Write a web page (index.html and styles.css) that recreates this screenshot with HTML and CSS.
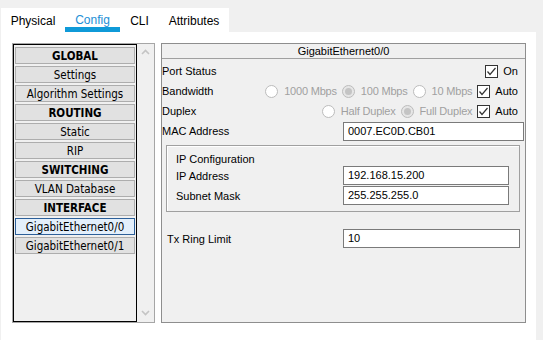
FILE: index.html
```html
<!DOCTYPE html>
<html lang="en">
<head>
  <meta charset="UTF-8" />
  <title>Router Config</title>
  <link rel="stylesheet" href="styles.css">
</head>
<body>
  <div class="window">
    <div class="tabs">
      <div class="tab tab-physical">Physical</div>
      <div class="tab tab-config active">Config</div>
      <div class="tab tab-cli">CLI</div>
      <div class="tab tab-attr">Attributes</div>
    </div>

    <div class="page">
      <div class="nav">
        <div class="nav-list">
          <div class="nav-item head">GLOBAL</div>
          <div class="nav-item">Settings</div>
          <div class="nav-item">Algorithm Settings</div>
          <div class="nav-item head">ROUTING</div>
          <div class="nav-item">Static</div>
          <div class="nav-item">RIP</div>
          <div class="nav-item head">SWITCHING</div>
          <div class="nav-item">VLAN Database</div>
          <div class="nav-item head">INTERFACE</div>
          <div class="nav-item selected">GigabitEthernet0/0</div>
          <div class="nav-item">GigabitEthernet0/1</div>
        </div>
        <div class="scrollbar">
          <svg width="9" height="6" viewBox="0 0 9 6"><polyline points="1,5 4.5,1.5 8,5" /></svg>
          <svg width="9" height="6" viewBox="0 0 9 6"><polyline points="1,1 4.5,4.5 8,1" /></svg>
        </div>
      </div>

      <div class="panel">
        <div class="panel-title">GigabitEthernet0/0</div>
        <div class="rows">
          <div class="row">
            <span class="label">Port Status</span>
            <div class="opts">
              <span class="check"><svg width="11" height="11" viewBox="0 0 11 11"><polyline points="1.5,5.5 4,8.5 9.5,2" /></svg></span>
              <span class="opt-text">On</span>
            </div>
          </div>
          <div class="row">
            <span class="label">Bandwidth</span>
            <div class="opts">
              <span class="radio"></span><span class="opt-text muted">1000 Mbps</span>
              <span class="radio on"></span><span class="opt-text muted">100 Mbps</span>
              <span class="radio"></span><span class="opt-text muted">10 Mbps</span>
              <span class="check"><svg width="11" height="11" viewBox="0 0 11 11"><polyline points="1.5,5.5 4,8.5 9.5,2" /></svg></span>
              <span class="opt-text">Auto</span>
            </div>
          </div>
          <div class="row">
            <span class="label">Duplex</span>
            <div class="opts">
              <span class="radio"></span><span class="opt-text muted">Half Duplex</span>
              <span class="radio on"></span><span class="opt-text muted">Full Duplex</span>
              <span class="check"><svg width="11" height="11" viewBox="0 0 11 11"><polyline points="1.5,5.5 4,8.5 9.5,2" /></svg></span>
              <span class="opt-text">Auto</span>
            </div>
          </div>
          <div class="row">
            <span class="label">MAC Address</span>
            <div class="field mac">0007.EC0D.CB01</div>
          </div>
        </div>

        <div class="ip-box">
          <div class="ip-title">IP Configuration</div>
          <div class="ip-row">
            <span class="label">IP Address</span>
            <div class="field ip">192.168.15.200</div>
          </div>
          <div class="ip-row">
            <span class="label">Subnet Mask</span>
            <div class="field ip">255.255.255.0</div>
          </div>
        </div>

        <div class="tx-row">
          <span class="label">Tx Ring Limit</span>
          <div class="field tx">10</div>
        </div>
      </div>
    </div>
  </div>
</body>
</html>
```

FILE: styles.css
```css
* {
  box-sizing: border-box;
}

body {
  margin: 0;
  background: #f0f0f0;
  font-family: "Liberation Sans", Arial, sans-serif;
  font-size: 11px;
  color: #000;
}

.window {
  margin: 8px 0 0 1px;
  width: 535px;
  height: 332px;
  display: flex;
  flex-direction: column;
}

/* TABS */
.tabs {
  display: flex;
  width: 228px;
  height: 24px;
  background: #fff;
}

.tab {
  display: flex;
  align-items: center;
  justify-content: center;
  font-size: 12px;
  padding-top: 1px;
}

.tab-physical { width: 64px; }
.tab-config { width: 55px; }
.tab-cli { width: 39px; }
.tab-attr { width: 70px; }

.tab.active {
  color: #1c8fd6;
  box-shadow: inset 0 -5px 0 #0f9ad8;
  padding-bottom: 1px;
}

/* PAGE */
.page {
  flex: 1;
  background: #fff;
  display: flex;
  gap: 6px;
  padding: 11px 0 0 11px;
}

.nav {
  width: 143px;
  height: 280px;
  border: 1px solid #a6a6a6;
  display: flex;
  background: #f0f0f0;
}

.nav-list {
  width: 124px;
  border: 1px solid #000;
  padding: 2px 1px 1px;
}

.nav-item {
  height: 17px;
  margin-bottom: 2px;
  border: 1px solid #adadad;
  background: #e1e1e1;
  text-align: center;
  line-height: 16px;
  font-family: "DejaVu Sans Condensed", "DejaVu Sans", sans-serif;
  font-size: 11.5px;
  white-space: nowrap;
}

.nav-item.head {
  font-weight: bold;
}

.nav-item.selected {
  background: #e3effb;
  border-color: #2c5f99;
}

.scrollbar {
  flex: 1;
  display: flex;
  flex-direction: column;
  justify-content: space-between;
  align-items: center;
  padding: 5px 0 6px;
}

.scrollbar polyline {
  fill: none;
  stroke: #c4c4c4;
  stroke-width: 1.6;
}

/* PANEL */
.panel {
  width: 365px;
  height: 280px;
  border: 1px solid #8e8e8e;
  background: #f0f0f0;
}

.panel-title {
  height: 15px;
  border-bottom: 1px solid #a0a0a0;
  text-align: center;
  line-height: 14px;
}

.rows {
  padding-top: 2px;
}

.row {
  display: flex;
  align-items: center;
  height: 20px;
}

.opts {
  margin-left: auto;
  padding-right: 7px;
  display: flex;
  align-items: center;
}

.opt-text {
  margin: 0 5px 0 6px;
  letter-spacing: -0.2px;
}

.opt-text:last-child {
  margin-right: 0;
  margin-left: 5px;
  letter-spacing: 0;
}

.muted {
  color: #a0a0a0;
}

.radio {
  width: 13px;
  height: 13px;
  border-radius: 50%;
  border: 1px solid #bcbcbc;
  background: #fff;
  display: flex;
  align-items: center;
  justify-content: center;
}

.radio.on {
  background: #e6e6e6;
}

.radio.on::after {
  content: "";
  width: 7px;
  height: 7px;
  border-radius: 50%;
  background: #c4c4c4;
}

.check {
  width: 13px;
  height: 13px;
  border: 1px solid #333;
  background: #fff;
  display: flex;
  align-items: center;
  justify-content: center;
}

.check polyline {
  fill: none;
  stroke: #333;
  stroke-width: 1.2;
}

.field {
  height: 19px;
  border: 1px solid #7a7a7a;
  background: #fff;
  padding-left: 4px;
  line-height: 17px;
  margin-left: auto;
}

.mac {
  width: 181px;
  margin-right: 1px;
}

/* IP CONFIGURATION */
.ip-box {
  margin: 4px 5px 0 4px;
  border: 1px solid #a0a0a0;
  box-shadow: inset 1px 1px 0 #fff;
  padding: 6px 10px 6px 9px;
}

.ip-title {
  height: 14px;
  line-height: 14px;
}

.ip-row {
  display: flex;
  align-items: center;
  margin-bottom: 1px;
}

.ip-row:last-child {
  margin-bottom: 0;
}

.ip {
  width: 166px;
}

.tx-row {
  display: flex;
  align-items: center;
  margin: 17px 5px 0 5px;
}

.tx {
  width: 177px;
}
```
